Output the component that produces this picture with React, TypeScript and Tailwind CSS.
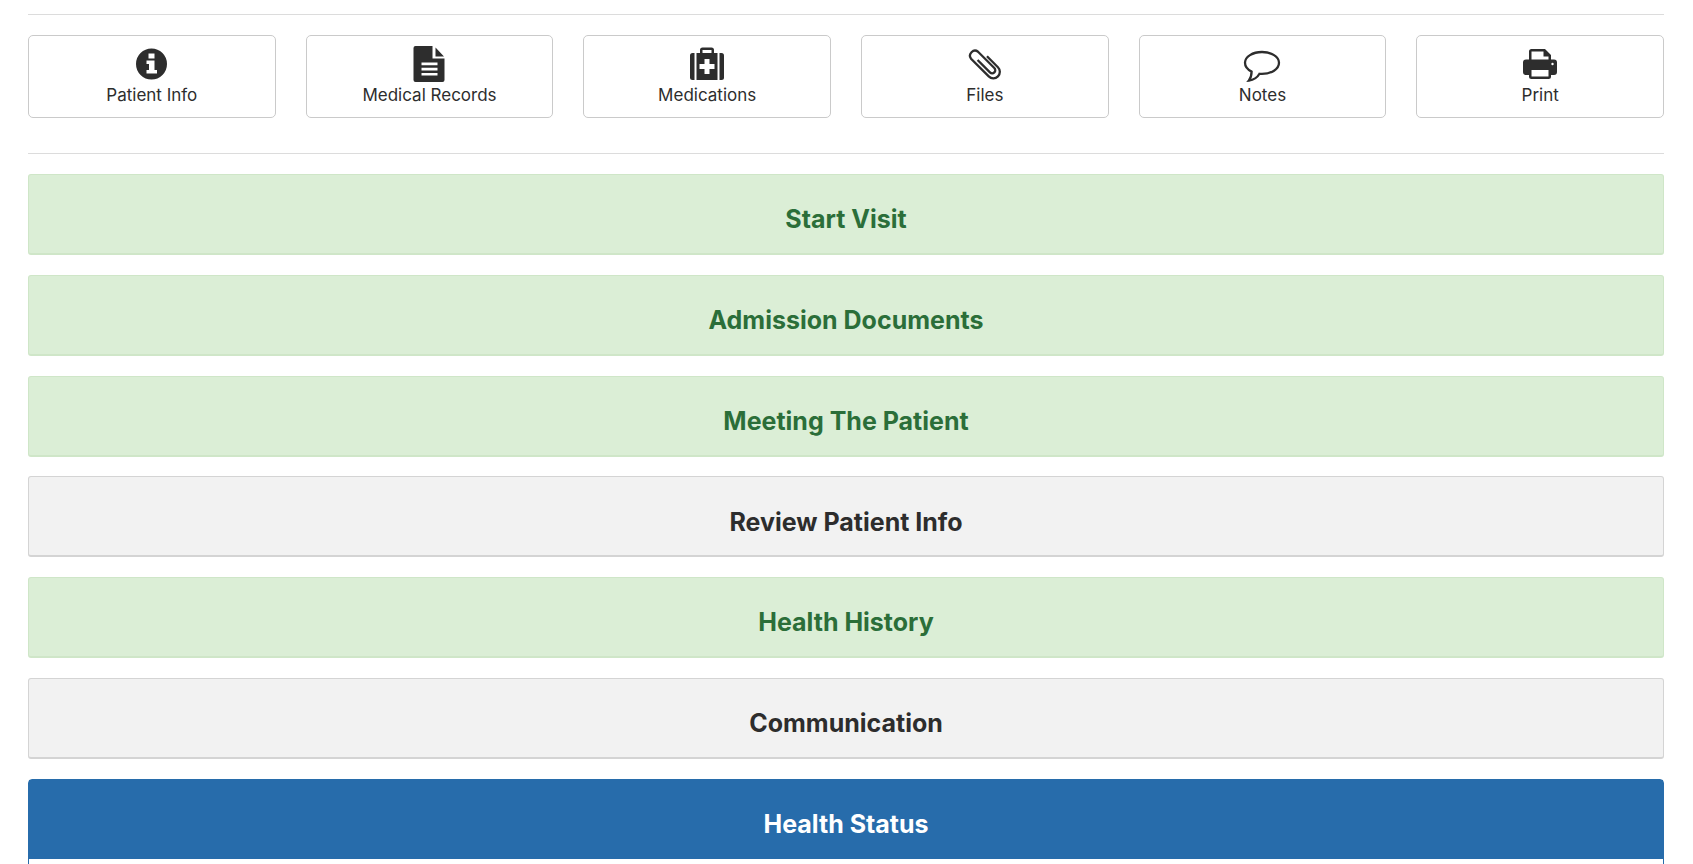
import React from "react";

const InfoIcon = () => (
  <svg viewBox="0 0 40 38" className="w-10 h-[38px]" fill="#2d2d2d">
    <path
      fillRule="evenodd"
      d="M19.5 3.5a15.5 15.5 0 1 0 0 31a15.5 15.5 0 1 0 0-31ZM16.5 8.5h6v5h-6ZM14.5 15.5h8v9.5h2.5v3.5h-10.5V25h2.5v-6h-2.5Z"
    />
  </svg>
);

const FileIcon = () => (
  <svg viewBox="0 0 40 38" className="w-10 h-[38px]" fill="#2d2d2d">
    <path
      fillRule="evenodd"
      d="M6.5 1H23.5V13.5H35.5V35a2 2 0 0 1-2 2H6.5a2 2 0 0 1-2-2V3a2 2 0 0 1 2-2ZM12.5 17.5V20.2H28.5V17.5ZM12.5 22.7V25.4H28.5V22.7ZM12.5 27.9V30.6H28.5V27.9Z"
    />
    <path d="M26.5 2.5L35 11.5H26.5Z" />
  </svg>
);

const MedkitIcon = () => (
  <svg viewBox="0 0 40 38" className="w-10 h-[38px]" fill="#2d2d2d">
    <path d="M7.5 8H5.5a2.5 2.5 0 0 0-2.5 2.5v22a2.5 2.5 0 0 0 2.5 2.5h2Z" />
    <path d="M32.5 8H34.5a2.5 2.5 0 0 1 2.5 2.5v22a2.5 2.5 0 0 1-2.5 2.5h-2Z" />
    <path
      fillRule="evenodd"
      d="M9.5 8H13V5a2.5 2.5 0 0 1 2.5-2.5h9A2.5 2.5 0 0 1 27 5V8H30.5V35H9.5ZM15.5 5V8H24.5V5ZM17.5 14V19H12.5V24H17.5V29H22.5V24H27.5V19H22.5V14Z"
    />
  </svg>
);

const ClipIcon = () => (
  <svg viewBox="0 0 40 38" className="w-10 h-[38px]" fill="none" stroke="#2d2d2d" strokeWidth="2.3">
    <g transform="translate(19.5 18)rotate(-45)">
      <path d="M-2.8 -7V10.5A3.1 3.1 0 0 0 3.4 10.5V-12.5A5 5 0 0 0 -6.5 -12.5V12.5A6.5 6.5 0 0 0 6.5 12.5V-3" />
    </g>
  </svg>
);

const CommentIcon = () => (
  <svg viewBox="0 0 40 38" className="w-10 h-[38px]" fill="none" stroke="#2d2d2d" strokeWidth="2.3">
    <path d="M20 7C10.6 7 3 11.8 3 17.8C3 21.4 5.6 24.6 9.6 26.6C9.6 30 8.6 33.4 6.9 35.5C11 35 15.5 32.3 17.5 28.8C18.3 28.9 19.2 28.9 20 28.9C29.4 28.9 37 24 37 17.8C37 11.8 29.4 7 20 7Z" />
  </svg>
);

const PrintIcon = () => (
  <svg viewBox="0 0 40 38" className="w-10 h-[38px]" fill="#2d2d2d">
    <path
      fillRule="evenodd"
      d="M11.5 4H25L31 10V14.5H34A3 3 0 0 1 37 17.5V27A3 3 0 0 1 34 30H31V31.5A2.5 2.5 0 0 1 28.5 34H11.5A2.5 2.5 0 0 1 9 31.5V30H6A3 3 0 0 1 3 27V17.5A3 3 0 0 1 6 14.5H9V6.5A2.5 2.5 0 0 1 11.5 4ZM11.5 6.5V14.5H28.5V11.5H23.5V6.5ZM11.5 25V31.5H28.5V25Z"
    />
    <circle cx="32.5" cy="19" r="1.2" fill="#fff" />
  </svg>
);

const tools = [
  { label: "Patient Info", icon: <InfoIcon /> },
  { label: "Medical Records", icon: <FileIcon /> },
  { label: "Medications", icon: <MedkitIcon /> },
  { label: "Files", icon: <ClipIcon /> },
  { label: "Notes", icon: <CommentIcon /> },
  { label: "Print", icon: <PrintIcon /> },
];

const sections = [
  { title: "Start Visit", done: true },
  { title: "Admission Documents", done: true },
  { title: "Meeting The Patient", done: true },
  { title: "Review Patient Info", done: false },
  { title: "Health History", done: true },
  { title: "Communication", done: false },
];

export default function App() {
  return (
    <div className="h-[864px] overflow-hidden bg-white pl-[28px] pr-[29px] pt-[14px] font-['Inter',sans-serif] text-[#2d2d2d]">
      <div className="border-t border-[#dcdcdc]" />

      {/* Toolbar */}
      <div className="mt-5 grid grid-cols-6 gap-[30px]">
        {tools.map((tool) => (
          <button
            key={tool.label}
            className="flex h-[83px] flex-col items-center rounded-[5px] border border-[#cacaca] bg-white pt-[9px]"
          >
            {tool.icon}
            <span className="text-[17px] leading-[24px]">{tool.label}</span>
          </button>
        ))}
      </div>

      <div className="mt-[35px] border-t border-[#dcdcdc]" />

      {/* Sections */}
      <div className="mt-5 flex flex-col gap-[19.8px]">
        {sections.map((section) =>
          section.done ? (
            <div
              key={section.title}
              className="flex h-[81px] items-center justify-center rounded-[3px] border border-b-2 border-[#cfe6c8] bg-[#dbeed6] pt-[12px] text-[25px] font-bold text-[#2b6e39]"
            >
              {section.title}
            </div>
          ) : (
            <div
              key={section.title}
              className="flex h-[81px] items-center justify-center rounded-[3px] border border-b-2 border-[#d4d4d4] bg-[#f2f2f2] pt-[12px] text-[25px] font-bold"
            >
              {section.title}
            </div>
          )
        )}

        <div className="rounded-t-[4px] border border-[#276cab]">
          <div className="flex h-[79px] items-center justify-center bg-[#276cab] pt-[10px] text-[25px] font-bold text-white">
            Health Status
          </div>
          <div className="h-10 bg-white" />
        </div>
      </div>
    </div>
  );
}
